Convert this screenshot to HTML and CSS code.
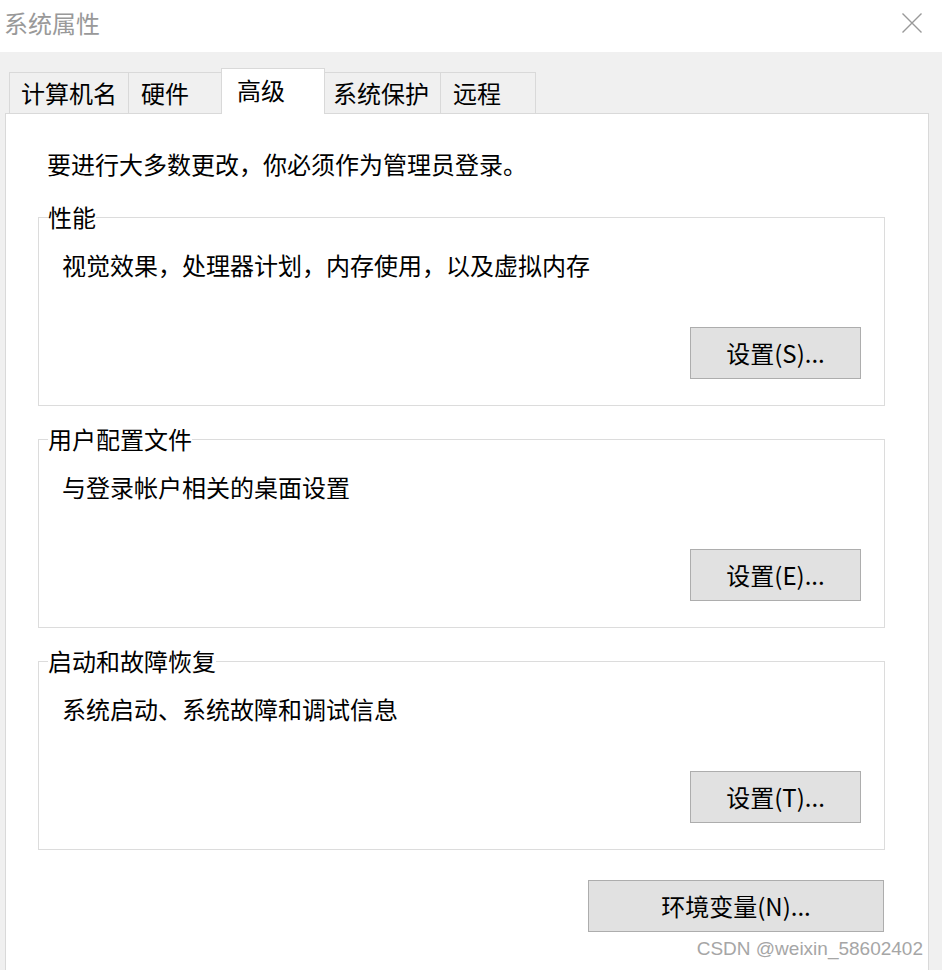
FILE: index.html
```html
<!DOCTYPE html>
<html lang="zh-CN">
<head>
<meta charset="utf-8">
<title>系统属性</title>
<link rel="stylesheet" href="styles.css">
</head>
<body>
<div class="window">
  <header class="titlebar">
    <span class="title">系统属性</span>
    <svg class="close" width="20" height="20" viewBox="0 0 20 20" aria-hidden="true">
      <path d="M0.5 0.5 L19.5 19.5 M19.5 0.5 L0.5 19.5" stroke="#999999" stroke-width="1.4" fill="none"/>
    </svg>
  </header>
  <div class="dialog">
    <nav class="tabs">
      <div class="tab tab-1">计算机名</div>
      <div class="tab tab-2">硬件</div>
      <div class="tab tab-3 active">高级</div>
      <div class="tab tab-4">系统保护</div>
      <div class="tab tab-5">远程</div>
    </nav>
    <main class="panel">
      <p class="intro">要进行大多数更改，你必须作为管理员登录。</p>
      <fieldset class="group group-first">
        <legend>性能</legend>
        <p class="desc">视觉效果，处理器计划，内存使用，以及虚拟内存</p>
        <div class="actions"><button class="btn">设置(S)...</button></div>
      </fieldset>
      <fieldset class="group">
        <legend>用户配置文件</legend>
        <p class="desc">与登录帐户相关的桌面设置</p>
        <div class="actions"><button class="btn">设置(E)...</button></div>
      </fieldset>
      <fieldset class="group">
        <legend>启动和故障恢复</legend>
        <p class="desc">系统启动、系统故障和调试信息</p>
        <div class="actions"><button class="btn">设置(T)...</button></div>
      </fieldset>
      <div class="footer"><button class="btn btn-wide">环境变量(N)...</button></div>
    </main>
  </div>
  <div class="watermark">CSDN @weixin_58602402</div>
</div>
</body>
</html>
```
FILE: styles.css
```css
html, body {
  margin: 0;
  padding: 0;
  height: 100%;
  overflow: hidden;
  background: #f0f0f0;
}

body {
  font-family: "Noto Sans CJK SC", "Microsoft YaHei", "Noto Sans", sans-serif;
  color: #000;
}

.window {
  position: relative;
  height: 970px;
  overflow: hidden;
}

.titlebar {
  height: 52px;
  box-sizing: border-box;
  background: #fff;
  display: flex;
  align-items: center;
  justify-content: space-between;
  padding: 0 20px 6px 4px;
}

.title {
  font-size: 24px;
  line-height: 32px;
  color: #999;
}

.close {
  display: block;
}

.dialog {
  background: #f0f0f0;
  padding-top: 16px;
  height: 918px;
  box-sizing: border-box;
}

.tabs {
  display: flex;
  align-items: flex-end;
  padding-left: 9px;
}

.tab {
  box-sizing: border-box;
  height: 41px;
  border: 1px solid #d9d9d9;
  border-bottom: none;
  background: #f0f0f0;
  font-size: 24px;
  line-height: 39px;
  padding: 0 0 0 11px;
  white-space: nowrap;
  margin-left: -1px;
}

.tab-1 { width: 120px; margin-left: 0; }
.tab-2 { width: 94px; padding-left: 12px; }
.tab-3 { width: 104px; }
.tab-4 { width: 117px; padding-left: 8px; }
.tab-5 { width: 96px; padding-left: 12px; }

.tab.active {
  position: relative;
  z-index: 1;
  height: 46px;
  margin-bottom: -1px;
  background: #fff;
  line-height: 42px;
  padding: 0 0 0 15px;
}

.panel {
  display: block;
  width: 924px;
  height: 900px;
  box-sizing: border-box;
  margin-left: 5px;
  background: #fff;
  border: 1px solid #d9d9d9;
  padding: 0 43px 0 32px;
}

.intro {
  margin: 34px 0 0 0;
  padding-left: 9px;
  font-size: 24px;
  line-height: 32px;
}

.group {
  margin: 21px 0 0 0;
  padding: 0 23px 26px 9px;
  border: 1px solid #dcdcdc;
  min-inline-size: 0;
}

.group-first {
  margin-top: 25px;
}

.group legend {
  padding: 0;
  font-size: 24px;
  line-height: 24px;
}

.desc {
  margin: 20px 0 0 14px;
  font-size: 24px;
  line-height: 32px;
}

.actions {
  display: flex;
  justify-content: flex-end;
  margin-top: 46px;
}

.btn {
  box-sizing: border-box;
  width: 171px;
  height: 52px;
  padding: 0;
  margin: 0;
  border: 1px solid #adadad;
  border-radius: 0;
  background: #e1e1e1;
  color: #000;
  font-family: "Noto Sans CJK SC", "Microsoft YaHei", "Noto Sans", sans-serif;
  font-size: 24px;
  line-height: 48px;
}

.footer {
  display: flex;
  justify-content: flex-end;
  margin: 30px 1px 0 0;
}

.btn-wide {
  width: 296px;
}

.watermark {
  position: absolute;
  top: 938px;
  right: 19px;
  font-family: "Liberation Sans", Arial, sans-serif;
  font-size: 19px;
  line-height: 22px;
  color: #a6a6a6;
  white-space: nowrap;
}
```
